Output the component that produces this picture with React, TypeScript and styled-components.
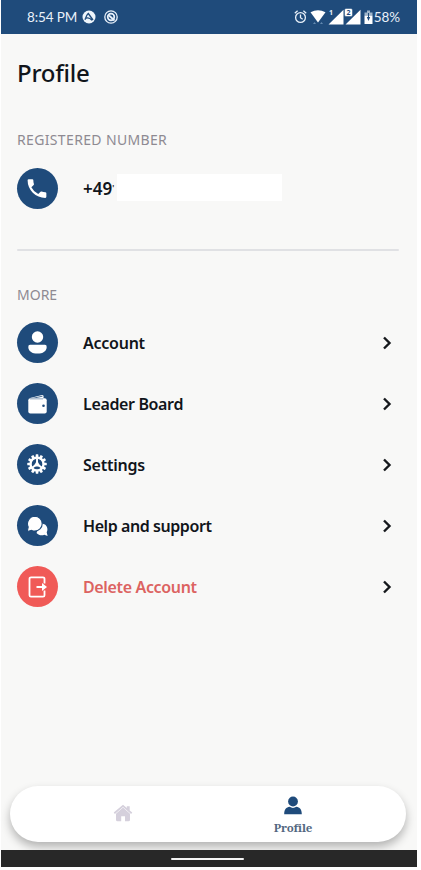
import React from "react";
import styled, { createGlobalStyle } from "styled-components";

const navy = "#1f4b7b";

const GlobalStyle = createGlobalStyle`
  * { box-sizing: border-box; }
  html, body { margin: 0; background: #fff; }
  body { overflow: hidden; }
  svg { display: block; flex: none; }
`;

const Screen = styled.main`
  display: flex;
  flex-direction: column;
  width: 416px;
  height: 867px;
  margin-left: 1px;
  background: #f8f8f7;
  font-family: "Noto Sans", sans-serif;
  color: #11151b;
`;

const StatusBar = styled.header`
  display: flex;
  align-items: center;
  height: 34px;
  padding: 0 17px 0 26px;
  background: ${navy};
  color: #e9f1fa;
`;

const StatusText = styled.span<{ $spacing: number }>`
  font: 400 13.5px/20px Lato, sans-serif;
  letter-spacing: ${(p) => p.$spacing}px;
  white-space: nowrap;
`;

const StatusLeft = styled.div`
  display: flex;
  align-items: center;
  width: 91px;
  justify-content: space-between;
`;

const StatusRight = styled.div`
  display: flex;
  align-items: center;
  margin-left: auto;
`;

const Content = styled.section`
  flex: 1;
  padding: 0 18px 0 16px;
`;

const Title = styled.h1`
  margin: 22px 0 0;
  font-size: 24px;
  font-weight: 500;
  line-height: 34px;
  letter-spacing: -0.25px;
`;

const SectionLabel = styled.h2<{ $top: number; $spacing: number }>`
  margin: ${(p) => p.$top}px 0 0;
  font-size: 14px;
  font-weight: 400;
  line-height: 20px;
  letter-spacing: ${(p) => p.$spacing}px;
  color: #8e8a92;
`;

const Item = styled.div<{ $danger?: boolean }>`
  display: flex;
  align-items: center;
  height: 61px;
  color: ${(p) => (p.$danger ? "#dc6361" : "inherit")};
`;

const NumberItem = styled(Item)`
  height: 41px;
  margin-top: 18px;
`;

const Badge = styled.div<{ $danger?: boolean }>`
  display: grid;
  place-items: center;
  flex: none;
  width: 41px;
  height: 41px;
  border-radius: 50%;
  background: ${(p) => (p.$danger ? "#f05a57" : navy)};
`;

const Label = styled.span<{ $spacing: number }>`
  margin-left: 25px;
  font-size: 16px;
  font-weight: 600;
  line-height: 24px;
  letter-spacing: ${(p) => p.$spacing}px;
  white-space: nowrap;
`;

const NumberLabel = styled(Label)`
  width: 34px;
  font-size: 17px;
`;

const NumberMark = styled.span`
  font-size: 8px;
  line-height: 1;
  vertical-align: 4px;
`;

const Chevron = styled.svg`
  margin: 0 7px 0 auto;
  color: #15181c;
`;

const Redaction = styled.div`
  width: 165px;
  height: 27px;
  margin: -2px 0 0 0;
  background: #fff;
`;

const Divider = styled.hr`
  height: 2px;
  margin: 40px 0 0;
  border: 0;
  border-radius: 1px;
  background: #e0e1e4;
`;

const List = styled.div`
  margin-top: 7px;
`;

const TabBar = styled.nav`
  display: grid;
  grid-template-columns: 226px 1fr;
  height: 56px;
  margin: 0 11px 8px 9px;
  border-radius: 28px;
  background: #fff;
  box-shadow: 0 5px 10px rgba(0, 0, 0, 0.28);
`;

const Tab = styled.div<{ $active?: boolean }>`
  display: flex;
  flex-direction: column;
  align-items: center;
  justify-content: flex-start;
  padding-top: ${(p) => (p.$active ? 10 : 18)}px;
  padding-right: ${(p) => (p.$active ? 56 : 0)}px;
`;

const TabLabel = styled.span`
  margin-top: 4px;
  font: 700 11.5px/17px "Noto Serif", "Noto Sans", serif;
  letter-spacing: -0.2px;
  color: #52677f;
`;

const SystemBar = styled.footer`
  display: flex;
  align-items: center;
  justify-content: center;
  height: 17px;
  padding-right: 3px;
  background: #282828;
`;

const HomeIndicator = styled.div`
  width: 73px;
  height: 2px;
  margin-top: 1px;
  border-radius: 1px;
  background: #f3f3f3;
`;

const PhoneIcon = () => (
  <svg width="25" height="25" viewBox="0.5 0 24 24" fill="#fff">
    <path d="M6.62 10.79a15.1 15.1 0 0 0 6.59 6.59l2.2-2.2a1 1 0 0 1 1.02-.24 11.4 11.4 0 0 0 3.57.57 1 1 0 0 1 1 1V20a1 1 0 0 1-1 1A17 17 0 0 1 3 4a1 1 0 0 1 1-1h3.5a1 1 0 0 1 1 1c0 1.25.2 2.45.57 3.57a1 1 0 0 1-.25 1.02z" />
  </svg>
);

const AccountIcon = () => (
  <svg width="24" height="26" viewBox="0.5 0.5 24 26" fill="#fff">
    <circle cx="12" cy="7.5" r="5.7" />
    <path d="M5 15.300h14a2 2 0 0 1 2.200 2.100c0 4-3.800 6.700-9.200 6.700s-9.200-2.700-9.200-6.700A2 2 0 0 1 5 15.300z" />
  </svg>
);

const WalletIcon = () => (
  <svg width="24" height="24" viewBox="0.5 0 24 24" fill="#fff">
    <path d="M4.500 5.900 16.500 3q1.500-.2 1.500 1.200v2H4.500z" />
    <path d="m5 6.800 12-2.600" fill="none" stroke={navy} strokeWidth=".8" />
    <rect x="2.800" y="6.300" width="18.400" height="15.200" rx="2" />
    <path d="M4.500 7h13" stroke={navy} strokeWidth=".5" opacity=".7" />
    <circle cx="18" cy="13.800" r="1.300" fill={navy} />
  </svg>
);

const GearIcon = () => (
  <svg width="21" height="21" viewBox="-10.500 -10.500 22 22">
    <g fill="#fff">
      {Array.from({ length: 12 }, (_, i) => (
        <rect key={i} x="-1.400" y="-10.200" width="2.800" height="4" rx=".5" transform={`rotate(${i * 30})`} />
      ))}
    </g>
    <circle r="6.800" fill="none" stroke="#fff" strokeWidth="2.400" />
    <path d="M0-6V0l5 4M0 0l-5 4" fill="none" stroke="#fff" strokeWidth="2" />
    <path d="M0-4 3.500 2.500h-7z" fill="#fff" />
  </svg>
);

const ChatIcon = () => (
  <svg width="24" height="24" viewBox="0.500 0 24 24">
    <path d="M11 19c2.500 2.700 5.700 2.700 7.800 1.700l3.300 1.200-.9-3.600c1.500-2.500.7-5.800-1.700-7.700L15 9z" fill="#fff" />
    <path d="M9.300 2.300a7.400 7.400 0 0 1 0 14.800q-1.600 0-3.100-.7L1.700 17.600l1-4.600A7.500 7.500 0 0 1 9.300 2.300z" fill="#fff" stroke={navy} strokeWidth="1.100" />
  </svg>
);

const ExitIcon = () => (
  <svg width="24" height="24" viewBox="0.500 0 24 24" fill="none" stroke="#fff" strokeWidth="1.800">
    <path d="M19 8.500V3.800a1.500 1.500 0 0 0-1.500-1.500H5.500A1.500 1.500 0 0 0 4 3.800v16.400a1.500 1.500 0 0 0 1.500 1.500h12a1.500 1.500 0 0 0 1.500-1.500v-4.700M11 12h7" />
    <path d="m16.500 8 5 4-5 4z" fill="#fff" stroke="none" />
  </svg>
);

const items = [
  { label: "Account", spacing: -0.25, Icon: AccountIcon },
  { label: "Leader Board", spacing: -0.36, Icon: WalletIcon },
  { label: "Settings", spacing: -0.25, Icon: GearIcon },
  { label: "Help and support", spacing: -0.43, Icon: ChatIcon },
  { label: "Delete Account", spacing: -0.35, Icon: ExitIcon, danger: true },
];

export default function App() {
  return (
    <>
      <GlobalStyle />
      <Screen>
        <StatusBar>
          <StatusLeft>
            <StatusText $spacing={-0.1}>8:54 PM</StatusText>
            <svg width="36" height="14" viewBox="0 0 36 14">
              <circle cx="7" cy="7" r="6.500" fill="#eef5fb" />
              <path d="M3 9.800c1-3 1.800-5.300 3.300-6.300L11 10M3 8.500q4-2 7 1.800" fill="none" stroke={navy} strokeWidth="1.300" />
              <g fill="none" stroke="#e9f1fa">
                <circle cx="29" cy="7" r="6.200" strokeWidth="1.300" />
                <circle cx="29" cy="7" r="3.300" strokeWidth="1.700" />
                <path d="m27 5.500 5.500 5" strokeWidth="1.700" />
              </g>
            </svg>
          </StatusLeft>
          <StatusRight>
            <svg width="80" height="20" viewBox="0 0 80 20">
              <g fill="none" stroke="#e9f1fa" strokeWidth="1.300">
                <circle cx="6.500" cy="10.500" r="4.900" />
                <path d="M6.500 7.500v3.200l2.200 1.500M.8 6.300l2.800-2.500M12.200 6.300 9.400 3.800" />
              </g>
              <path d="M16.500 5.200q7.500-4 15 0L24 15.500z" fill="#fff" />
              <path d="m19 17 1.500-2 1.500 2zm7 0 1.500-2 1.500 2z" fill="#6389b0" />
              <path d="M49.500 2.800V17.500H34.500zM66.500 2.800V17.500H51.500z" fill="#fff" />
              <text x="35" y="7.500" fontSize="7" fontWeight="700" fontFamily="Noto Sans" fill="#e9f1fa">1</text>
              <rect x="50.500" y="1.500" width="8" height="8" rx="1.500" fill="#fff" stroke={navy} strokeWidth=".5" />
              <text x="52.500" y="8" fontSize="7" fontWeight="700" fontFamily="Noto Sans" fill={navy}>2</text>
              <path d="M70.500 5.500H73V3.500h3v2h2.500v3h-8z" fill="#9fb5ca" />
              <path d="M70.500 8.500h8v8.500h-8z" fill="#fff" />
              <path d="M74 6v4h-1.200l1.700 4 1.700-4H75V6z" fill={navy} />
            </svg>
            <StatusText $spacing={-0.1}>58%</StatusText>
          </StatusRight>
        </StatusBar>
        <Content>
          <Title>Profile</Title>
          <SectionLabel $top={40} $spacing={0.35}>REGISTERED NUMBER</SectionLabel>
          <NumberItem>
            <Badge><PhoneIcon /></Badge>
            <NumberLabel $spacing={0}>+49<NumberMark>'</NumberMark></NumberLabel>
            <Redaction />
          </NumberItem>
          <Divider />
          <SectionLabel $top={34} $spacing={0}>MORE</SectionLabel>
          <List>
            {items.map(({ label, spacing, Icon, danger }) => (
              <Item key={label} $danger={danger}>
                <Badge $danger={danger}><Icon /></Badge>
                <Label $spacing={spacing}>{label}</Label>
                <Chevron width="10" height="14" viewBox="0 0 10 14" fill="none" stroke="currentColor" strokeWidth="2.400">
                  <path d="m2 1.500 5.500 5.500-5.500 5.500" />
                </Chevron>
              </Item>
            ))}
          </List>
        </Content>
        <TabBar>
          <Tab>
            <svg width="20" height="18" viewBox="0 0 20 18" fill="#d5d0dc">
              <path d="M.7 8.600 10 .7l3.800 3.200V2.300h2.900v4.100l2.600 2.200-1.200 1.300L10 3 1.900 9.900z" />
              <path d="m10 3.500 7 6.200v6.100a1.500 1.500 0 0 1-1.500 1.500H12v-5H8.200v5H4.500A1.500 1.500 0 0 1 3 15.800V9.700z" />
            </svg>
          </Tab>
          <Tab $active>
            <svg width="18" height="19" viewBox="0 0 18 19" fill={navy}>
              <circle cx="9" cy="5.500" r="4.900" />
              <path d="M.2 18.300c0-5 2.100-7 5.400-7.500q3.400 2.200 6.800 0c3.300.5 5.400 2.500 5.400 7.500z" />
            </svg>
            <TabLabel>Profile</TabLabel>
          </Tab>
        </TabBar>
        <SystemBar><HomeIndicator /></SystemBar>
      </Screen>
    </>
  );
}
